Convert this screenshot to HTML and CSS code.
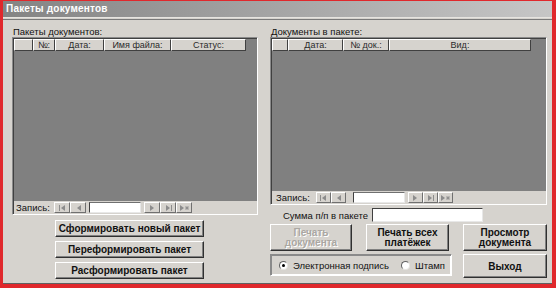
FILE: index.html
```html
<!DOCTYPE html>
<html lang="ru">
<head>
    <meta charset="UTF-8">
    <title>Пакеты документов</title>
    <link rel="stylesheet" href="styles.css">
</head>
<body>
    <div class="window">
        <div class="titlebar">Пакеты документов</div>
        <div class="rule"></div>

        <div class="content">
            <!-- left: packages -->
            <div class="col col-left">
                <div class="label">Пакеты документов:</div>
                <div class="grid grid-left">
                    <div class="grid-head">
                        <div class="hcell w-sel"></div>
                        <div class="hcell w-num">№:</div>
                        <div class="hcell w-date">Дата:</div>
                        <div class="hcell w-file">Имя файла:</div>
                        <div class="hcell w-status">Статус:</div>
                    </div>
                    <div class="grid-body"></div>
                    <div class="nav nav-left">
                        <span class="nav-label">Запись:</span>
                        <span class="nbtn"><svg width="9" height="6" viewBox="0 0 9 6"><rect x="1" y="0" width="1" height="6"/><polygon points="3,3 7,0 7,6"/></svg></span>
                        <span class="nbtn"><svg width="9" height="6" viewBox="0 0 9 6"><polygon points="3,3 7,0 7,6"/></svg></span>
                        <span class="ninput"></span>
                        <span class="nbtn"><svg width="9" height="6" viewBox="0 0 9 6"><polygon points="6,3 2,0 2,6"/></svg></span>
                        <span class="nbtn"><svg width="9" height="6" viewBox="0 0 9 6"><polygon points="6,3 2,0 2,6"/><rect x="7" y="0" width="1" height="6"/></svg></span>
                        <span class="nbtn"><svg width="11" height="6" viewBox="0 0 11 6"><polygon points="5,3 1,0 1,6"/><path d="M8 1 L8 5 M6 3 L10 3 M6.5 1.5 L9.5 4.5 M9.5 1.5 L6.5 4.5" stroke="#8c8c8c" stroke-width="0.8"/></svg></span>
                    </div>
                </div>

                <div class="actions">
                    <button class="btn btn-wide">Сформировать новый пакет</button>
                    <button class="btn btn-wide">Переформировать пакет</button>
                    <button class="btn btn-wide">Расформировать пакет</button>
                </div>
            </div>

            <!-- right: documents in package -->
            <div class="col col-right">
                <div class="label">Документы в пакете:</div>
                <div class="grid grid-right">
                    <div class="grid-head">
                        <div class="hcell w-sel2"></div>
                        <div class="hcell w-date2">Дата:</div>
                        <div class="hcell w-doc">№ док.:</div>
                        <div class="hcell w-kind">Вид:</div>
                    </div>
                    <div class="grid-body"></div>
                    <div class="nav nav-right">
                        <span class="nav-label">Запись:</span>
                        <span class="nbtn"><svg width="9" height="6" viewBox="0 0 9 6"><rect x="1" y="0" width="1" height="6"/><polygon points="3,3 7,0 7,6"/></svg></span>
                        <span class="nbtn"><svg width="9" height="6" viewBox="0 0 9 6"><polygon points="3,3 7,0 7,6"/></svg></span>
                        <span class="ninput"></span>
                        <span class="nbtn"><svg width="9" height="6" viewBox="0 0 9 6"><polygon points="6,3 2,0 2,6"/></svg></span>
                        <span class="nbtn"><svg width="9" height="6" viewBox="0 0 9 6"><polygon points="6,3 2,0 2,6"/><rect x="7" y="0" width="1" height="6"/></svg></span>
                        <span class="nbtn"><svg width="11" height="6" viewBox="0 0 11 6"><polygon points="5,3 1,0 1,6"/><path d="M8 1 L8 5 M6 3 L10 3 M6.5 1.5 L9.5 4.5 M9.5 1.5 L6.5 4.5" stroke="#8c8c8c" stroke-width="0.8"/></svg></span>
                    </div>
                </div>

                <div class="sum-row">
                    <span class="sum-label">Сумма п/п в пакете</span>
                    <span class="field"></span>
                </div>

                <div class="btn-row">
                    <button class="btn btn-tall" disabled>Печать<br>документа</button>
                    <button class="btn btn-tall">Печать всех<br>платёжек</button>
                    <button class="btn btn-tall">Просмотр<br>документа</button>
                </div>

                <div class="bottom-row">
                    <div class="radio-box">
                        <span class="radio checked"></span>
                        <span class="radio-text">Электронная подпись</span>
                        <span class="radio"></span>
                        <span class="radio-text">Штамп</span>
                    </div>
                    <button class="btn btn-exit">Выход</button>
                </div>
            </div>
        </div>
    </div>
</body>
</html>
```

FILE: styles.css
```css
* {
    box-sizing: border-box;
}

body {
    margin: 0;
    font-family: 'Liberation Sans', Arial, sans-serif;
    background: #fff;
}

.window {
    width: 556px;
    height: 288px;
    background: #d6d3ce;
    border-style: solid;
    border-color: #e0282c;
    border-width: 1px 4px 4px 3px;
    box-shadow: inset 0 -1px 0 #606060;
    overflow: hidden;
}

.titlebar {
    height: 16px;
    padding-left: 3px;
    background: linear-gradient(to right, #848484, #c6c6c6);
    color: #fff;
    font-size: 10px;
    font-weight: bold;
    line-height: 16px;
    letter-spacing: 0.2px;
}

.rule {
    height: 3px;
    border-top: 1px solid #e6e4e0;
    border-bottom: 1px solid #7a7a7a;
}

.content {
    display: flex;
    gap: 12px;
    padding-left: 9px;
}

.col {
    display: flex;
    flex-direction: column;
}

.col-left {
    width: 246px;
}

.col-right {
    width: 277px;
}

.label {
    margin-top: 7px;
    height: 10px;
    font-size: 9.5px;
    line-height: 10px;
    color: #111;
    padding-left: 1px;
}

/* data grid */
.grid {
    display: flex;
    flex-direction: column;
    border: 1px solid;
    border-color: #8a8a8a #fff #fff #8a8a8a;
    padding: 1px 0 0 1px;
    background: #404040;
}

.grid-left {
    height: 178px;
}

.grid-right {
    height: 168px;
}

.grid-head {
    display: flex;
    height: 12px;
    background: #808080;
}

.hcell {
    height: 12px;
    background: #d6d3ce;
    border-top: 1px solid #fff;
    border-left: 1px solid #fff;
    border-right: 1px solid #404040;
    border-bottom: 1px solid #404040;
    font-size: 9px;
    line-height: 10px;
    color: #2a2a2a;
    text-align: center;
}

.w-sel { width: 19px; }
.w-num { width: 22px; }
.w-date { width: 49px; }
.w-file { width: 67px; }
.w-status { width: 75px; }

.w-sel2 { width: 16px; }
.w-date2 { width: 55px; }
.w-doc { width: 46px; }
.w-kind { width: 142px; }

.grid-body {
    flex: 1;
    background: #808080;
}

.nav {
    display: flex;
    align-items: center;
    height: 13px;
    background: #d6d3ce;
    font-size: 9.5px;
    color: #111;
}

.nav-label {
    width: 40px;
    padding-left: 2px;
}

.nav-right .nav-label {
    width: 44px;
    padding-left: 4px;
}

.nbtn {
    display: flex;
    align-items: center;
    justify-content: center;
    width: 16px;
    height: 11px;
    background: #d6d3ce;
    border: 1px solid;
    border-color: #fff #707070 #707070 #fff;
    fill: #8c8c8c;
}

.nav-right .nbtn {
    width: 15px;
}

.ninput {
    width: 52px;
    height: 11px;
    margin: 0 3px;
    background: #fff;
    border: 1px solid;
    border-color: #707070 #e8e8e8 #e8e8e8 #404040;
}

.nav-right .ninput {
    margin: 0 3px 0 7px;
}

/* buttons */
.btn {
    display: block;
    padding: 0;
    background: #d6d3ce;
    border: 1px solid;
    border-color: #fff #303030 #303030 #fff;
    box-shadow: inset -1px -1px 0 #808080;
    font-family: 'Liberation Sans', Arial, sans-serif;
    font-size: 10px;
    font-weight: bold;
    color: #111;
    text-align: center;
}

.btn:disabled {
    color: #aaa7a2;
    text-shadow: 1px 1px 0 #fff;
}

.actions {
    display: flex;
    flex-direction: column;
    gap: 4px;
    margin-top: 5px;
    padding-left: 43px;
}

.btn-wide {
    width: 149px;
    height: 17px;
    line-height: 14px;
}

.sum-row {
    display: flex;
    align-items: center;
    height: 14px;
    margin-top: 3px;
    padding-left: 13px;
    font-size: 9.5px;
    color: #111;
}

.sum-label {
    flex-shrink: 0;
    width: 87px;
    white-space: nowrap;
}

.field {
    width: 111px;
    height: 14px;
    margin-left: 2px;
    background: #fff;
    border: 1px solid;
    border-color: #404040 #e8e8e8 #e8e8e8 #404040;
}

.btn-row {
    display: flex;
    justify-content: space-between;
    margin-top: 2px;
}

.btn-tall {
    height: 27px;
    line-height: 10px;
}

.btn-row .btn:nth-child(1) { width: 82px; }
.btn-row .btn:nth-child(2) { width: 83px; }
.btn-row .btn:nth-child(3) { width: 84px; }

.bottom-row {
    display: flex;
    justify-content: space-between;
    margin-top: 3px;
}

.radio-box {
    display: flex;
    align-items: center;
    width: 182px;
    height: 22px;
    padding-left: 8px;
    border: 1px solid;
    border-color: #8a8a8a #fff #fff #8a8a8a;
    box-shadow: 1px 1px 0 #8a8a8a inset, -1px -1px 0 #fff inset;
    font-size: 9.5px;
    color: #111;
    white-space: nowrap;
}

.radio {
    flex-shrink: 0;
    position: relative;
    width: 9px;
    height: 9px;
    border-radius: 50%;
    background: #fff;
    border: 1px solid;
    border-color: #606060 #e6e4e0 #e6e4e0 #606060;
}

.radio.checked::after {
    content: '';
    position: absolute;
    left: 2px;
    top: 2px;
    width: 3px;
    height: 3px;
    border-radius: 50%;
    background: #000;
}

.radio-text {
    flex-shrink: 0;
    margin-left: 5px;
    margin-right: 12px;
}

.btn-exit {
    width: 84px;
    height: 24px;
}
```
